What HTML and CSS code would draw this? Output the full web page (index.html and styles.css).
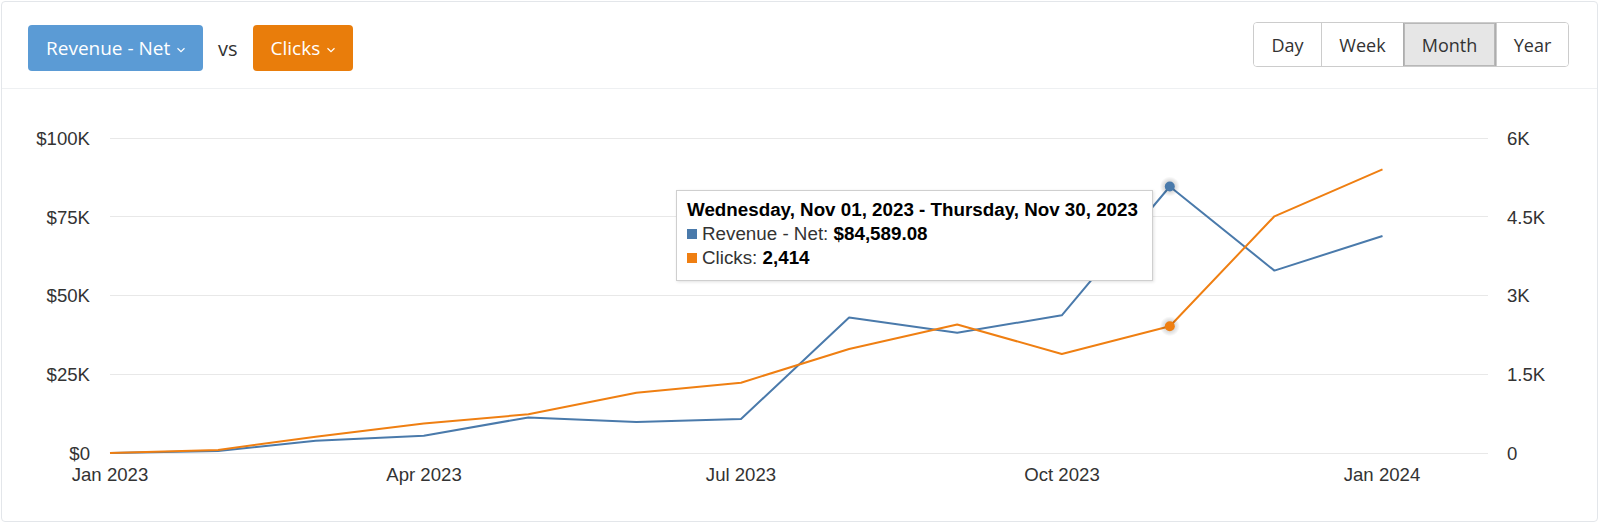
FILE: index.html
```html
<!DOCTYPE html>
<html>
<head>
<meta charset="utf-8">
<link rel="stylesheet" href="styles.css">
</head>
<body>
<div class="card">
  <div class="toolbar">
    <div class="metrics">
      <button class="metric metric-blue">Revenue - Net <svg class="chev" width="10" height="6" viewBox="0 0 10 6"><path d="M1.5 1.2 L5 4.6 L8.5 1.2" fill="none" stroke="#fff" stroke-width="1.2"/></svg></button>
      <span class="vs">vs</span>
      <button class="metric metric-orange">Clicks <svg class="chev" width="10" height="6" viewBox="0 0 10 6"><path d="M1.5 1.2 L5 4.6 L8.5 1.2" fill="none" stroke="#fff" stroke-width="1.2"/></svg></button>
    </div>
    <div class="periods">
      <button class="period period-day">Day</button>
      <button class="period period-week">Week</button>
      <button class="period period-month active">Month</button>
      <button class="period period-year">Year</button>
    </div>
  </div>
  <div class="chart">
    <svg class="plot" width="1595" height="432" viewBox="0 0 1595 432">
      <defs>
        <radialGradient id="halo">
          <stop offset="0" stop-color="#000" stop-opacity="0.22"/>
          <stop offset="0.6" stop-color="#000" stop-opacity="0.12"/>
          <stop offset="1" stop-color="#000" stop-opacity="0"/>
        </radialGradient>
      </defs>
      <g transform="translate(-2,-89)">
        <g class="grid">
          <line x1="110" y1="138.5" x2="1488" y2="138.5"/>
          <line x1="110" y1="216.5" x2="1488" y2="216.5"/>
          <line x1="110" y1="295.5" x2="1488" y2="295.5"/>
          <line x1="110" y1="374.5" x2="1488" y2="374.5"/>
          <line x1="110" y1="453.5" x2="1488" y2="453.5"/>
        </g>
        <g class="ylabels-left">
          <text x="90" y="145">$100K</text>
          <text x="90" y="224">$75K</text>
          <text x="90" y="302">$50K</text>
          <text x="90" y="381">$25K</text>
          <text x="90" y="460">$0</text>
        </g>
        <g class="ylabels-right">
          <text x="1507" y="145">6K</text>
          <text x="1507" y="224">4.5K</text>
          <text x="1507" y="302">3K</text>
          <text x="1507" y="381">1.5K</text>
          <text x="1507" y="460">0</text>
        </g>
        <g class="xlabels">
          <text x="110" y="481">Jan 2023</text>
          <text x="424" y="481">Apr 2023</text>
          <text x="741" y="481">Jul 2023</text>
          <text x="1062" y="481">Oct 2023</text>
          <text x="1382" y="481">Jan 2024</text>
        </g>
        <polyline class="line-blue" points="110,453 218.1,451.1 315.7,440.7 423.8,435.7 528.4,417.4 636.4,422.1 741,419 849.1,317.5 957.2,332.7 1061.8,315.3 1169.8,186.5 1274.4,270.6 1382.5,236"/>
        <polyline class="line-orange" points="110,453 218.1,450 315.7,436.7 423.8,423.4 528.4,414.3 636.4,392.8 741,382.7 849.1,349 957.2,324.5 1061.8,354 1169.8,326.3 1274.4,216.3 1382.5,169.4"/>
        <circle cx="1169.8" cy="186.5" r="10" fill="url(#halo)"/>
        <circle cx="1169.8" cy="186.5" r="5" class="dot-blue"/>
        <circle cx="1169.8" cy="326.3" r="10" fill="url(#halo)"/>
        <circle cx="1169.8" cy="326.3" r="5" class="dot-orange"/>
      </g>
    </svg>
    <div class="tooltip">
      <div class="tt-title">Wednesday, Nov 01, 2023 - Thursday, Nov 30, 2023</div>
      <div class="tt-row"><span class="sq sq-blue"></span>Revenue - Net: <b>$84,589.08</b></div>
      <div class="tt-row"><span class="sq sq-orange"></span>Clicks: <b>2,414</b></div>
    </div>
  </div>
</div>
</body>
</html>
```
FILE: styles.css
```css
* { box-sizing: border-box; }
html, body { margin: 0; padding: 0; background: #fff; }
body { padding: 1px 0 0 1px; font-family: "Liberation Sans", Arial, sans-serif; }

.card {
  width: 1597px;
  height: 521px;
  border: 1px solid #e3e6ea;
  border-radius: 4px;
  background: #fff;
  display: flex;
  flex-direction: column;
}

.toolbar {
  height: 87px;
  flex: none;
  border-bottom: 1px solid #eef0f2;
  padding: 23px 28px 0 26px;
  display: flex;
  justify-content: space-between;
  align-items: flex-start;
}

.metrics { display: flex; align-items: center; gap: 15px; }

.metric {
  height: 46px;
  border: none;
  border-radius: 4px;
  color: #fff;
  font-family: "Open Sans", sans-serif;
  font-size: 19px;
  padding: 0 0 0 18px;
  display: flex;
  align-items: center;
  gap: 6px;
  cursor: pointer;
}
.metric-blue { background: #5b9bd5; width: 175px; }
.metric-orange { background: #e97d0b; width: 100px; }
.chev { margin-top: 3px; }

.vs {
  font-family: "Open Sans", sans-serif;
  font-size: 20px;
  color: #333;
}

.periods {
  display: flex;
  margin-top: -3px;
  border: 1px solid #ccc;
  border-radius: 4px;
  overflow: hidden;
  height: 45px;
}
.period {
  height: 43px;
  border: none;
  border-left: 1px solid #ccc;
  background: #fff;
  font-family: "Open Sans", sans-serif;
  font-size: 18px;
  color: #333;
  padding: 0;
}
.period-day { border-left: none; width: 67px; }
.period-week { width: 82px; }
.period-month { width: 93px; }
.period-year { width: 72px; }
.period.active { background: #e6e6e6; border-left-color: #adadad; border-right: 1px solid #adadad; box-shadow: inset 0 0 0 1px #b8b8b8; }

.chart { position: relative; flex: 1; }
.plot { display: block; }

.grid line { stroke: #e8e8e8; stroke-width: 1; }
.ylabels-left text, .ylabels-right text, .xlabels text {
  font-family: "Liberation Sans", Arial, sans-serif;
  font-size: 18.6px;
  fill: #333;
}
.ylabels-left text { text-anchor: end; }
.ylabels-right text { text-anchor: start; }
.xlabels text { text-anchor: middle; }

.line-blue { fill: none; stroke: #4a7aab; stroke-width: 2; stroke-linejoin: round; }
.line-orange { fill: none; stroke: #ef7f12; stroke-width: 2; stroke-linejoin: round; }
.dot-blue { fill: #4a7aab; }
.dot-orange { fill: #ef7f12; }

.tooltip {
  position: absolute;
  left: 674px;
  top: 101px;
  width: 477px;
  height: 91px;
  background: #fff;
  border: 1px solid #cfcfcf;
  box-shadow: 1px 1px 3px rgba(0,0,0,0.12);
  padding: 7px 10px 0 10px;
  font-family: "Liberation Sans", Arial, sans-serif;
  font-size: 18.8px;
  line-height: 24px;
  color: #333;
}
.tt-title { font-weight: bold; color: #000; white-space: nowrap; }
.tt-row { display: flex; align-items: center; white-space: pre; }
.tt-row b { color: #000; }
.sq { width: 10px; height: 10px; margin-right: 5px; flex: none; }
.sq-blue { background: #4a7aab; }
.sq-orange { background: #ef7f12; }
```
